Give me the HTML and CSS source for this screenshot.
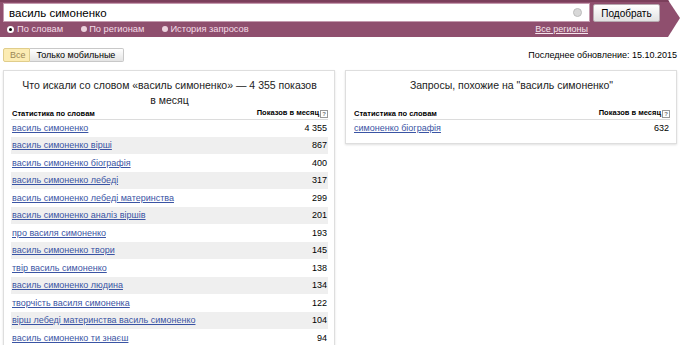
FILE: index.html
```html
<!DOCTYPE html>
<html lang="ru">
<head>
<meta charset="utf-8">
<link rel="stylesheet" href="styles.css">
</head>
<body>
<div class="header">
  <div class="search-col">
    <div class="input">
      <span class="query">василь симоненко</span>
      <span class="clear"></span>
    </div>
    <div class="mode-row">
      <label class="mode"><span class="radio on"></span>По словам</label>
      <label class="mode"><span class="radio"></span>По регионам</label>
      <label class="mode"><span class="radio"></span>История запросов</label>
      <a class="regions" href="#">Все регионы</a>
    </div>
  </div>
  <button class="submit">Подобрать</button>
</div>

<div class="toolbar">
  <div class="tabs">
    <span class="tab active">Все</span><span class="tab">Только мобильные</span>
  </div>
  <div class="updated">Последнее обновление: 15.10.2015</div>
</div>

<div class="panels">
  <div class="panel">
    <div class="panel-title">Что искали со словом «василь симоненко» — 4 355 показов в месяц</div>
    <table class="stats">
      <thead><tr><th class="kw">Статистика по словам</th><th class="cnt">Показов в месяц<span class="hint">?</span></th></tr></thead>
      <tbody>
        <tr><td><a href="#">василь симоненко</a></td><td class="num">4 355</td></tr>
        <tr><td><a href="#">василь симоненко вірші</a></td><td class="num">867</td></tr>
        <tr><td><a href="#">василь симоненко біографія</a></td><td class="num">400</td></tr>
        <tr><td><a href="#">василь симоненко лебеді</a></td><td class="num">317</td></tr>
        <tr><td><a href="#">василь симоненко лебеді материнства</a></td><td class="num">299</td></tr>
        <tr><td><a href="#">василь симоненко аналіз віршів</a></td><td class="num">201</td></tr>
        <tr><td><a href="#">про василя симоненко</a></td><td class="num">193</td></tr>
        <tr><td><a href="#">василь симоненко твори</a></td><td class="num">145</td></tr>
        <tr><td><a href="#">твір василь симоненко</a></td><td class="num">138</td></tr>
        <tr><td><a href="#">василь симоненко людина</a></td><td class="num">134</td></tr>
        <tr><td><a href="#">творчість василя симоненка</a></td><td class="num">122</td></tr>
        <tr><td><a href="#">вірш лебеді материнства василь симоненко</a></td><td class="num">104</td></tr>
        <tr><td><a href="#">василь симоненко ти знаєш</a></td><td class="num">94</td></tr>
      </tbody>
    </table>
  </div>
  <div class="panel right">
    <div class="panel-title single">Запросы, похожие на "василь симоненко"</div>
    <table class="stats">
      <thead><tr><th class="kw">Статистика по словам</th><th class="cnt">Показов в месяц<span class="hint">?</span></th></tr></thead>
      <tbody>
        <tr><td><a href="#">симоненко біографія</a></td><td class="num">632</td></tr>
      </tbody>
    </table>
  </div>
</div>
</body>
</html>
```
FILE: styles.css
```css
* { box-sizing: border-box; }
body {
  margin: 0;
  font-family: "Liberation Sans", Arial, sans-serif;
  color: #000;
  background: #fff;
  width: 680px;
  height: 345px;
  overflow: hidden;
}
.header {
  height: 37px;
  background: #8f4f6e;
  border-top: 2px solid #7b3f5b;
  padding: 1px 20px 0 3px;
  display: flex;
  align-items: flex-start;
  clip-path: polygon(0 0, 668px 0, 680px 18px, 668px 37px, 0 37px);
}
.search-col {
  flex: 1;
  display: flex;
  flex-direction: column;
}
.input {
  height: 19px;
  background: #fff;
  border: 1px solid #c49aae;
  display: flex;
  align-items: center;
  justify-content: space-between;
  padding: 0 7px 0 5px;
}
.query {
  font-size: 11.5px;
  color: #000;
}
.clear {
  width: 9px;
  height: 9px;
  border-radius: 50%;
  background: #d8d8d8;
  border: 1px solid #bcbcbc;
}
.submit {
  margin-left: 3px;
  margin-top: 1px;
  width: 67px;
  height: 18px;
  font-family: inherit;
  font-size: 10px;
  color: #000;
  background: linear-gradient(#ffffff, #e2e2e2);
  border: 1px solid #b7aab0;
  border-radius: 2px;
  padding: 0;
}
.mode-row {
  display: flex;
  align-items: center;
  height: 14px;
  font-size: 9.3px;
  color: #f3dbe6;
  padding-left: 4px;
  padding-right: 2px;
}
.mode {
  display: flex;
  align-items: center;
  margin-right: 18px;
}
.radio {
  width: 6px;
  height: 6px;
  border-radius: 50%;
  background: #ecd3de;
  margin-right: 2px;
}
.radio.on {
  width: 7px;
  height: 7px;
  background: #000;
  border: 2px solid #fff;
  margin-right: 3px;
}
.regions {
  margin-left: auto;
  font-size: 9px;
  color: #f5e4ec;
  text-decoration: underline;
}
.toolbar {
  display: flex;
  justify-content: space-between;
  align-items: center;
  padding: 11px 3px 0 3px;
}
.tabs {
  display: flex;
  height: 14px;
  font-size: 9px;
}
.tab {
  display: flex;
  align-items: center;
  padding: 0 8px 0 7px;
  border: 1px solid #c8c8c8;
  background: linear-gradient(#ffffff, #e4e4e4);
  color: #000;
  border-radius: 0 2px 2px 0;
}
.tab.active {
  background: #fcecb3;
  border-color: #e0cd8b;
  color: #9a8755;
  padding: 0 3px 0 6px;
  border-radius: 2px 0 0 2px;
}
.tab + .tab { border-left: none; }
.updated {
  font-size: 9px;
  color: #000;
}
.panels {
  display: grid;
  grid-template-columns: 332px 332px;
  column-gap: 10px;
  align-items: start;
  padding: 8px 3px 0 3px;
}
.panel {
  border: 1px solid #dedede;
  box-shadow: 0 1px 2px rgba(0,0,0,0.12);
  padding: 7px 6px 6px 7px;
  min-height: 300px;
}
.panel.right {
  min-height: 0;
}
.panel-title {
  font-size: 10.5px;
  line-height: 15px;
  text-align: center;
  padding: 0 10px;
  color: #222;
}
.panel-title.single {
  padding-bottom: 15px;
}
.stats {
  width: 100%;
  border-collapse: collapse;
  font-size: 9px;
}
.stats th {
  font-size: 7.5px;
  font-weight: bold;
  text-align: left;
  height: 11px;
  padding: 0 1px;
  border-bottom: 1px solid #dcdcdc;
  vertical-align: middle;
}
.stats th.cnt { text-align: right; padding-right: 0; }
.hint {
  display: inline-block;
  width: 8px;
  height: 8px;
  border: 1px solid #999;
  font-size: 6px;
  line-height: 6px;
  text-align: center;
  color: #777;
  margin-left: 1px;
  vertical-align: -1px;
}
.stats td {
  height: 17.5px;
  padding: 0 1px;
  vertical-align: middle;
}
.stats tbody tr:nth-child(even) td { background: #efefef; }
.stats a {
  color: #3a54a4;
  text-decoration: underline;
}
.stats td.num { text-align: right; color: #000; padding-right: 1px; }
```
